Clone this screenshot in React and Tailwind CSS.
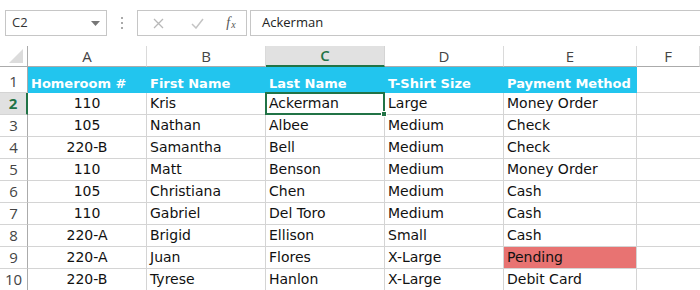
const rows = [
  ["110", "Kris", "Ackerman", "Large", "Money Order"],
  ["105", "Nathan", "Albee", "Medium", "Check"],
  ["220-B", "Samantha", "Bell", "Medium", "Check"],
  ["110", "Matt", "Benson", "Medium", "Money Order"],
  ["105", "Christiana", "Chen", "Medium", "Cash"],
  ["110", "Gabriel", "Del Toro", "Medium", "Cash"],
  ["220-A", "Brigid", "Ellison", "Small", "Cash"],
  ["220-A", "Juan", "Flores", "X-Large", "Pending"],
  ["220-B", "Tyrese", "Hanlon", "X-Large", "Debit Card"],
];

const heads = ["Homeroom #", "First Name", "Last Name", "T-Shirt Size", "Payment Method"];
const cols = ["A", "B", "C", "D", "E", "F"];

const cellFont = { fontFamily: '"DejaVu Sans", "Open Sans", sans-serif' };

export default function App() {
  return (
    <div className="w-[700px] h-[290px] overflow-hidden bg-white text-[#222]" style={{ fontFamily: '"Open Sans", "Liberation Sans", sans-serif' }}>
      {/* formula bar */}
      <div className="flex items-stretch h-[26px] mt-[10px] pl-[5px]">
        <div className="w-[102px] border border-[#c6c6c6] flex items-center justify-between pl-[6px] pr-[6px] text-[13px] text-[#333]">
          <span>C2</span>
          <svg width="9" height="5" viewBox="0 0 9 5"><path d="M0 0h9L4.5 5z" fill="#777" /></svg>
        </div>
        <div className="w-[30px] flex items-center justify-center">
          <svg width="3" height="12" viewBox="0 0 3 12"><rect x="0" y="0" width="2" height="2" fill="#aaa" /><rect x="0" y="5" width="2" height="2" fill="#aaa" /><rect x="0" y="10" width="2" height="2" fill="#aaa" /></svg>
        </div>
        <div className="w-[110px] border border-[#c6c6c6] flex items-center">
          <div className="w-[40px] flex justify-center">
            <svg width="11" height="11" viewBox="0 0 11 11"><path d="M1 1l9 9M10 1l-9 9" stroke="#b8b8b8" strokeWidth="1.3" /></svg>
          </div>
          <div className="w-[38px] flex justify-center">
            <svg width="13" height="11" viewBox="0 0 13 11"><path d="M1 6l4 4 7-9" stroke="#c4c4c4" strokeWidth="1.5" fill="none" /></svg>
          </div>
          <div className="flex-1 flex items-baseline justify-center text-[14px] italic text-[#555] leading-none" style={{ fontFamily: '"Liberation Serif", serif' }}>
            <span>f</span><span className="text-[10px] ml-[1px] relative top-[1px]">x</span>
          </div>
        </div>
        <div className="ml-[3px] flex-1 border-y border-l border-[#c6c6c6] flex items-center pl-[11px] text-[13px] text-[#222]">
          Ackerman
        </div>
      </div>

      {/* sheet */}
      <div className="mt-[10px] grid grid-cols-[28px_119px_119px_119px_119px_133px_63px] grid-rows-[21px_26px_repeat(9,22px)] text-[14px]">
        {/* column headers */}
        <div className="border-r border-b border-[#ababab] relative">
          <svg className="absolute right-[4px] bottom-[3px]" width="14" height="14" viewBox="0 0 14 14"><path d="M14 0v14H0z" fill="#dcdcdc" /></svg>
        </div>
        {cols.map((c) => (
          <div
            key={c}
            className={
              c === "C"
                ? "bg-[#e1e1e1] border-b-2 border-b-[#217346] border-r border-r-[#d4d4d4] flex items-center justify-center text-[#217346] font-semibold text-[15px]"
                : "border-b border-b-[#ababab] border-r border-r-[#dadada] flex items-center justify-center text-[#444] text-[15px]"
            }
          >
            {c}
          </div>
        ))}

        {/* row 1 */}
        <div className="border-r border-r-[#ababab] border-b border-b-[#d4d4d4] flex items-end justify-center text-[#444] text-[15px]">1</div>
        {heads.map((h) => (
          <div key={h} className="bg-[#22c5ee] text-white font-bold flex items-end pl-[3px] text-[13px] whitespace-nowrap overflow-hidden" style={cellFont}>
            {h}
          </div>
        ))}
        <div className="border-b border-[#d4d4d4]"></div>

        {rows.map((r, i) => {
          const n = i + 2;
          const sel = n === 2;
          return [
            <div
              key={`h${n}`}
              className={
                sel
                  ? "bg-[#e1e1e1] border-r-2 border-r-[#217346] border-b border-b-[#d4d4d4] flex items-end justify-center text-[#217346] font-bold text-[15px]"
                  : "border-r border-r-[#ababab] border-b border-b-[#d4d4d4] flex items-end justify-center text-[#444] text-[15px]"
              }
            >
              {n}
            </div>,
            ...r.map((v, j) => {
              const pending = v === "Pending";
              let cls = "border-r border-b border-[#d4d4d4] flex items-end whitespace-nowrap text-[14px] text-[#111]";
              if (j === 0) cls += " justify-center";
              else cls += " pl-[3px]";
              if (pending) cls += " bg-[#e87372]";
              if (sel && j === 2) {
                return (
                  <div key={`${n}-${j}`} className="relative border-2 border-[#217346] -mt-[1px] -ml-[1px] flex items-end pl-[2px] whitespace-nowrap text-[14px] text-[#111] leading-[19px]" style={cellFont}>
                    {v}
                    <span className="absolute -right-[4px] -bottom-[4px] w-[6px] h-[6px] bg-[#217346] border border-white"></span>
                  </div>
                );
              }
              return (
                <div key={`${n}-${j}`} className={cls} style={cellFont}>
                  {v}
                </div>
              );
            }),
            <div key={`f${n}`} className="border-b border-[#d4d4d4]"></div>,
          ];
        })}
      </div>
    </div>
  );
}
